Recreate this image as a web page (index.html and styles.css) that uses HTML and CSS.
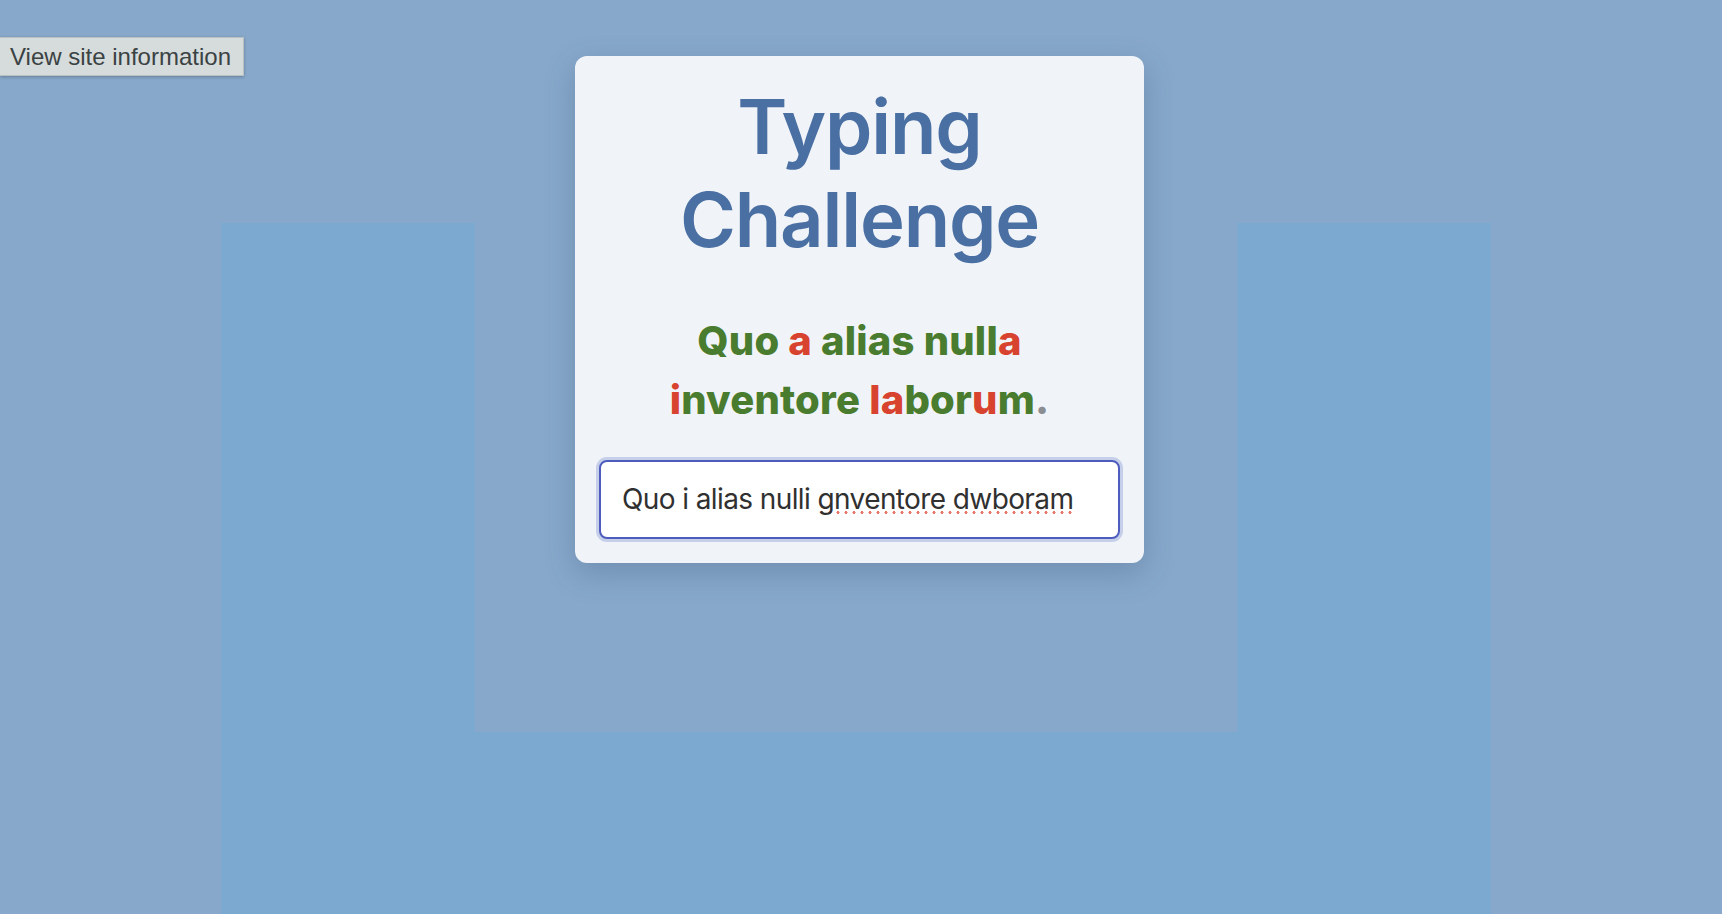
FILE: index.html
```html
<!DOCTYPE html>
<html lang="en">
<head>
<meta charset="utf-8">
<title>Typing Challenge</title>
<link rel="stylesheet" href="styles.css">
</head>
<body>
<div class="stage">
  <div class="backdrop">
    <div class="backdrop-hole"></div>
  </div>
  <main class="card">
    <h1 class="title">Typing Challenge</h1>
    <p class="sentence"><span class="ok">Quo </span><span class="bad">a</span><span class="ok"> alias null</span><span class="bad">a</span><span class="ok"> </span><span class="bad">i</span><span class="ok">nventore </span><span class="bad">la</span><span class="ok">bor</span><span class="bad">u</span><span class="ok">m</span><span class="rest">.</span></p>
    <div class="field" role="textbox" aria-label="Type the sentence">Quo i alias nulli <span class="misspelt">gnventore dwboram</span></div>
  </main>
</div>
<div class="tooltip">View site information</div>
</body>
</html>
```

FILE: styles.css
```css
html, body {
  margin: 0;
  padding: 0;
}

body {
  background: #87a8ca;
  height: 914px;
  overflow: hidden;
  font-family: Inter, "Noto Sans", sans-serif;
}

.stage {
  display: grid;
  height: 914px;
}

.stage > * {
  grid-area: 1 / 1;
}

.backdrop {
  margin: 223px 0 0 221px;
  width: 1270px;
  height: 691px;
  background: #7ca9cf;
  align-self: start;
  justify-self: start;
}

.backdrop-hole {
  margin-left: 254px;
  width: 762px;
  height: 509px;
  background: #87a8ca;
}

.card {
  align-self: start;
  justify-self: center;
  margin-top: 56px;
  margin-left: -3px;
  width: 569px;
  box-sizing: border-box;
  padding: 24px;
  background: #f0f4f9;
  border-radius: 12px;
  box-shadow: 0 10px 30px rgba(50, 75, 115, 0.28);
  text-align: center;
}

.title {
  margin: 0 0 45px;
  font-size: 76px;
  line-height: 93px;
  font-weight: 600;
  color: #4a6fa3;
  letter-spacing: -1.2px;
}

.sentence {
  margin: 0 0 31px;
  font-size: 40px;
  line-height: 59px;
  font-weight: 800;
  letter-spacing: 0.2px;
}

.ok { color: #4a7c2f; }
.bad { color: #d8432f; }
.rest { color: #8a8d92; }

.field {
  box-sizing: border-box;
  width: 100%;
  height: 79px;
  padding: 20px 21px;
  border: 2px solid #4e5dbd;
  border-radius: 8px;
  background: #ffffff;
  box-shadow: 0 0 0 3px #c6cfea;
  text-align: left;
  font-size: 28px;
  line-height: 35px;
  color: #303030;
  letter-spacing: -0.6px;
  white-space: nowrap;
}

.misspelt {
  background-image: radial-gradient(circle at 4px 2.5px, #e8766a 1.3px, transparent 1.8px);
  background-size: 8px 6px;
  background-repeat: repeat-x;
  background-position: 1px 100%;
}

.tooltip {
  position: absolute;
  left: 0;
  top: 37px;
  width: 244px;
  height: 39px;
  box-sizing: border-box;
  padding: 0 0 0 10px;
  background: #d6dcdb;
  border: 1px solid #b9c1c3;
  border-left: none;
  box-shadow: 0 1px 3px rgba(0, 0, 0, 0.25);
  font-family: "Liberation Sans", Arial, sans-serif;
  font-size: 24px;
  line-height: 37px;
  color: #3b4244;
  white-space: nowrap;
}
```
